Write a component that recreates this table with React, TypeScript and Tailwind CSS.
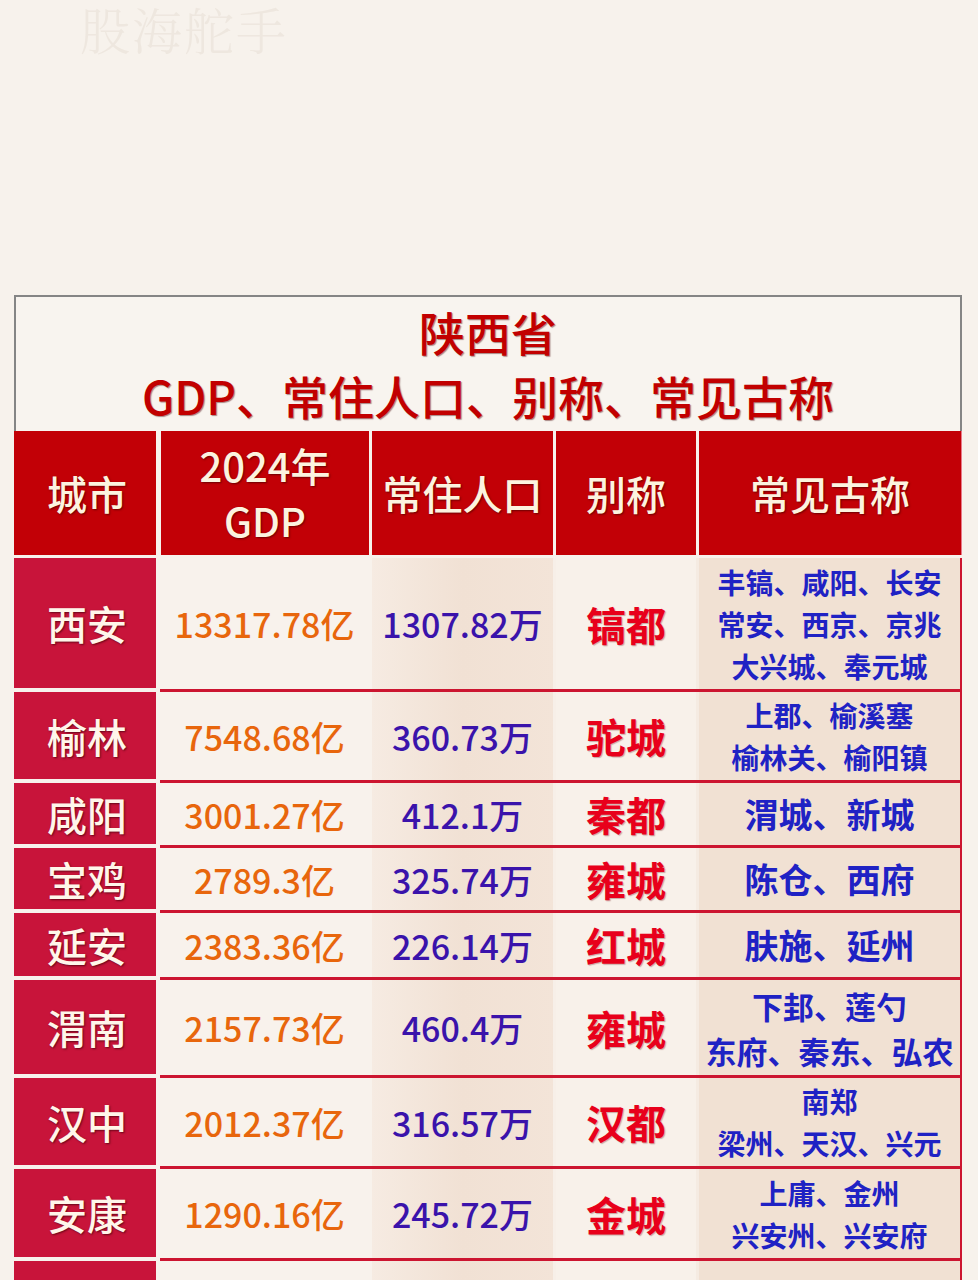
const font = "font-['Noto_Sans_CJK_SC','Noto_Sans',sans-serif]"

type Row = {
  city: string
  gdp: string
  pop: string
  alias: string
  names: string[]
  nameCls: string
  h: string
}

const rows: Row[] = [
  { city: '西安', gdp: '13317.78亿', pop: '1307.82万', alias: '镐都', names: ['丰镐、咸阳、长安', '常安、西京、京兆', '大兴城、奉元城'], nameCls: 'text-[28px] leading-[42px]', h: 'h-[134px]' },
  { city: '榆林', gdp: '7548.68亿', pop: '360.73万', alias: '驼城', names: ['上郡、榆溪塞', '榆林关、榆阳镇'], nameCls: 'text-[28px] leading-[42px]', h: 'h-[91px]' },
  { city: '咸阳', gdp: '3001.27亿', pop: '412.1万', alias: '秦都', names: ['渭城、新城'], nameCls: 'text-[34px] leading-[44px]', h: 'h-[65px]' },
  { city: '宝鸡', gdp: '2789.3亿', pop: '325.74万', alias: '雍城', names: ['陈仓、西府'], nameCls: 'text-[34px] leading-[44px]', h: 'h-[65px]' },
  { city: '延安', gdp: '2383.36亿', pop: '226.14万', alias: '红城', names: ['肤施、延州'], nameCls: 'text-[34px] leading-[44px]', h: 'h-[67px]' },
  { city: '渭南', gdp: '2157.73亿', pop: '460.4万', alias: '雍城', names: ['下邽、莲勺', '东府、秦东、弘农'], nameCls: 'text-[31px] leading-[45px]', h: 'h-[98px]' },
  { city: '汉中', gdp: '2012.37亿', pop: '316.57万', alias: '汉都', names: ['南郑', '梁州、天汉、兴元'], nameCls: 'text-[28px] leading-[42px]', h: 'h-[91px]' },
  { city: '安康', gdp: '1290.16亿', pop: '245.72万', alias: '金城', names: ['上庸、金州', '兴安州、兴安府'], nameCls: 'text-[28px] leading-[42px]', h: 'h-[92px]' },
  { city: '商洛', gdp: '966.11亿', pop: '201.85万', alias: '鞅城', names: ['上洛、商州、商於'], nameCls: 'text-[28px] leading-[42px]', h: 'h-[92px]' },
]

const headShadow = '[text-shadow:1px_1px_2px_rgba(70,0,0,0.7)]'

function HeaderRow() {
  return (
    <div className="flex h-[124px] text-[40px] leading-[55px] font-medium text-[#fcf3df]">
      <div className={`w-[142px] bg-[#c20006] flex items-center justify-center pl-[4px] ${headShadow}`}>城市</div>
      <div className="w-[5px]" />
      <div className={`w-[208px] bg-[#c20006] flex flex-col items-center justify-center ${headShadow}`}>
        <span>2024年</span>
        <span>GDP</span>
      </div>
      <div className="w-[3px]" />
      <div className={`w-[181px] bg-[#c20006] flex items-center justify-center ${headShadow}`}>常住人口</div>
      <div className="w-[3px]" />
      <div className={`w-[140px] bg-[#c20006] flex items-center justify-center ${headShadow}`}>别称</div>
      <div className="w-[3px]" />
      <div className={`flex-1 bg-[#c20006] border-r border-[#e9798a] flex items-center justify-center ${headShadow}`}>常见古称</div>
    </div>
  )
}

function BodyRow({ r }: { r: Row }) {
  return (
    <div className={`flex ${r.h}`}>
      <div className="w-[142px] mb-[4px] pl-[4px] bg-[#c8143a] flex items-center justify-center text-[40px] font-medium text-[#fff6ea] [text-shadow:1px_1px_2px_rgba(60,0,10,0.7)]">
        {r.city}
      </div>
      <div className="w-[4px]" />
      <div className="flex-1 flex border-b-[3px] border-r-2 border-[#cc1530]">
        <div className="w-[209px] bg-[#f8f2ec] flex items-center justify-center text-[34px] font-medium text-[#e8660c]">
          {r.gdp}
        </div>
        <div className="w-[3px] bg-[#f8f2ec]" />
        <div className="w-[181px] bg-gradient-to-r from-[#f6ebe2] via-[#f1e1d4] to-[#f3e4d8] flex items-center justify-center text-[34px] font-medium text-[#3a13ab]">
          {r.pop}
        </div>
        <div className="w-[3px] bg-[#f7efe8]" />
        <div className="w-[140px] bg-[#f8f1ea] flex items-center justify-center text-[40px] font-bold text-[#e8001b] [text-shadow:1px_1px_1px_rgba(90,0,0,0.3)]">
          {r.alias}
        </div>
        <div className="w-[3px] bg-[#f5ebe2]" />
        <div className={`flex-1 bg-[#f1e1d3] flex flex-col items-center justify-center font-bold text-[#1f22c4] ${r.nameCls}`}>
          {r.names.map(n => (
            <span key={n}>{n}</span>
          ))}
        </div>
      </div>
    </div>
  )
}

export default function App() {
  return (
    <div className={`h-[1280px] w-[978px] overflow-hidden bg-[#f7f2ec] ${font}`}>
      <div className="h-[295px] pl-[80px] pt-[2px]">
        <div className="text-[50px] leading-[52px] font-light tracking-[2px] text-[#eee7df] font-['Noto_Serif_CJK_SC','Noto_Sans_CJK_SC',serif]">
          股海舵手
        </div>
      </div>
      <div className="ml-[14px] w-[948px]">
        <div className="border-x-2 border-t-2 border-[#858585] bg-[#f8f4ef] pt-[2px] pb-[4px] text-center text-[46px] leading-[64px] font-medium text-[#c20000] [text-shadow:1px_1px_1px_rgba(70,0,0,0.45)]">
          <div>陕西省</div>
          <div>GDP、常住人口、别称、常见古称</div>
        </div>
        <HeaderRow />
        <div className="mt-[3px]">
          {rows.map(r => (
            <BodyRow key={r.city} r={r} />
          ))}
        </div>
      </div>
    </div>
  )
}
